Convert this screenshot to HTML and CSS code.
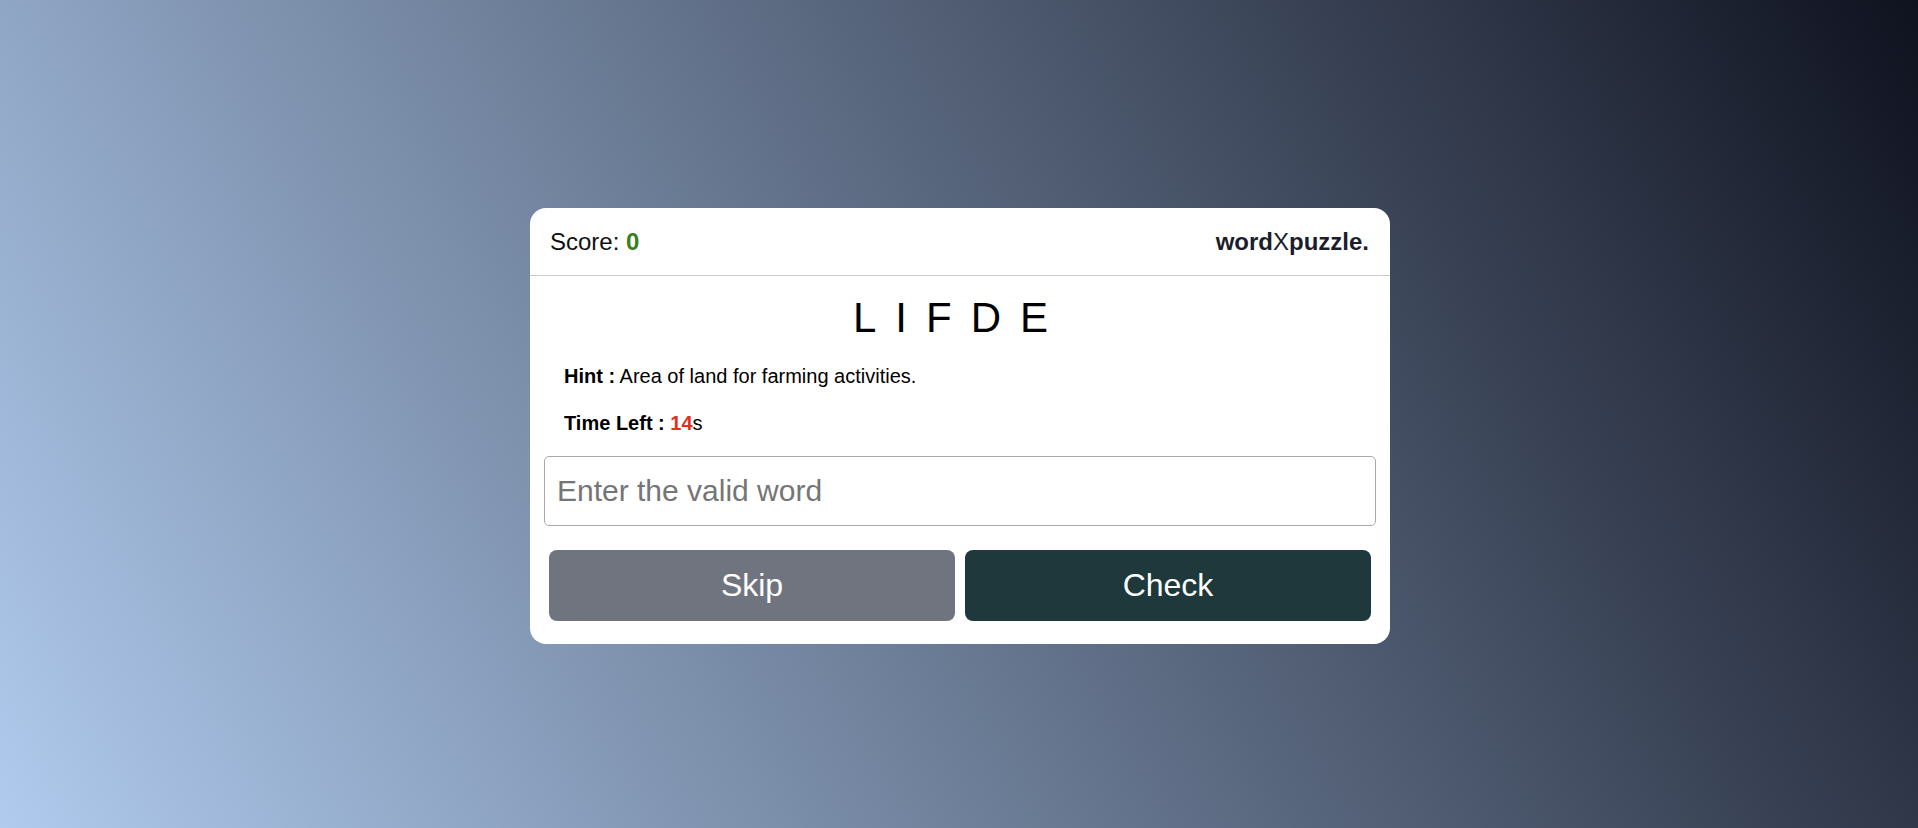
FILE: index.html
```html
<!DOCTYPE html>
<html lang="en">
<head>
<meta charset="UTF-8">
<title>wordXpuzzle</title>
<link rel="stylesheet" href="styles.css">
</head>
<body>
  <main class="card">
    <header class="card-header">
      <div class="score">Score: <b class="score-value">0</b></div>
      <div class="logo"><b>word</b>X<b>puzzle.</b></div>
    </header>
    <section class="content">
      <p class="word">LIFDE</p>
      <div class="details">
        <p class="hint"><b>Hint :</b> Area of land for farming activities.</p>
        <p class="time"><b>Time Left :</b> <span class="time-value">14</span>s</p>
      </div>
      <input class="word-input" type="text" placeholder="Enter the valid word">
      <div class="buttons">
        <button class="btn btn-skip">Skip</button>
        <button class="btn btn-check">Check</button>
      </div>
    </section>
  </main>
</body>
</html>
```
FILE: styles.css
```css
* {
  box-sizing: border-box;
}

html, body {
  margin: 0;
  height: 100%;
}

body {
  font-family: "Liberation Sans", Arial, sans-serif;
  min-height: 100vh;
  padding: 24px 0 0 2px;
  display: flex;
  align-items: center;
  justify-content: center;
  background: linear-gradient(60deg, #b0cbee 0%, #0f121f 100%);
}

.card {
  width: 860px;
  background: #ffffff;
  border-radius: 16px;
}

.card-header {
  display: flex;
  align-items: center;
  justify-content: space-between;
  padding: 20px 21px 20px 20px;
  border-bottom: 1px solid #cccccc;
  font-size: 24px;
  line-height: 27px;
}

.score {
  color: #111111;
}

.score-value {
  color: #3c7d22;
}

.logo {
  color: #1c1e2c;
}

.logo b {
  font-weight: 700;
}

.content {
  padding: 18px 14px 23px;
}

.word {
  margin: 0;
  font-size: 42px;
  line-height: 48px;
  letter-spacing: 19px;
  text-align: center;
  color: #000000;
}

.details {
  padding: 0 20px;
  margin-top: 23px;
}

.details p {
  margin: 0;
  font-size: 20px;
  line-height: 23px;
  color: #000000;
}

.details .time {
  margin-top: 24px;
}

.time-value {
  color: #e0301e;
  font-weight: 700;
}

.word-input {
  display: block;
  width: 100%;
  height: 70px;
  margin-top: 21px;
  padding: 0 12px;
  border: 1px solid #aaaaaa;
  border-radius: 5px;
  font-family: "Liberation Sans", Arial, sans-serif;
  font-size: 30px;
  color: #222222;
  outline: none;
}

.word-input::placeholder {
  color: #757575;
}

.buttons {
  display: flex;
  margin-top: 24px;
}

.btn {
  flex: 1;
  height: 71px;
  margin: 0 5px;
  border: none;
  border-radius: 8px;
  color: #ffffff;
  font-family: "Liberation Sans", Arial, sans-serif;
  font-size: 32px;
  cursor: pointer;
}

.btn-skip {
  background: #6f747e;
}

.btn-check {
  background: #1f383c;
}
```
